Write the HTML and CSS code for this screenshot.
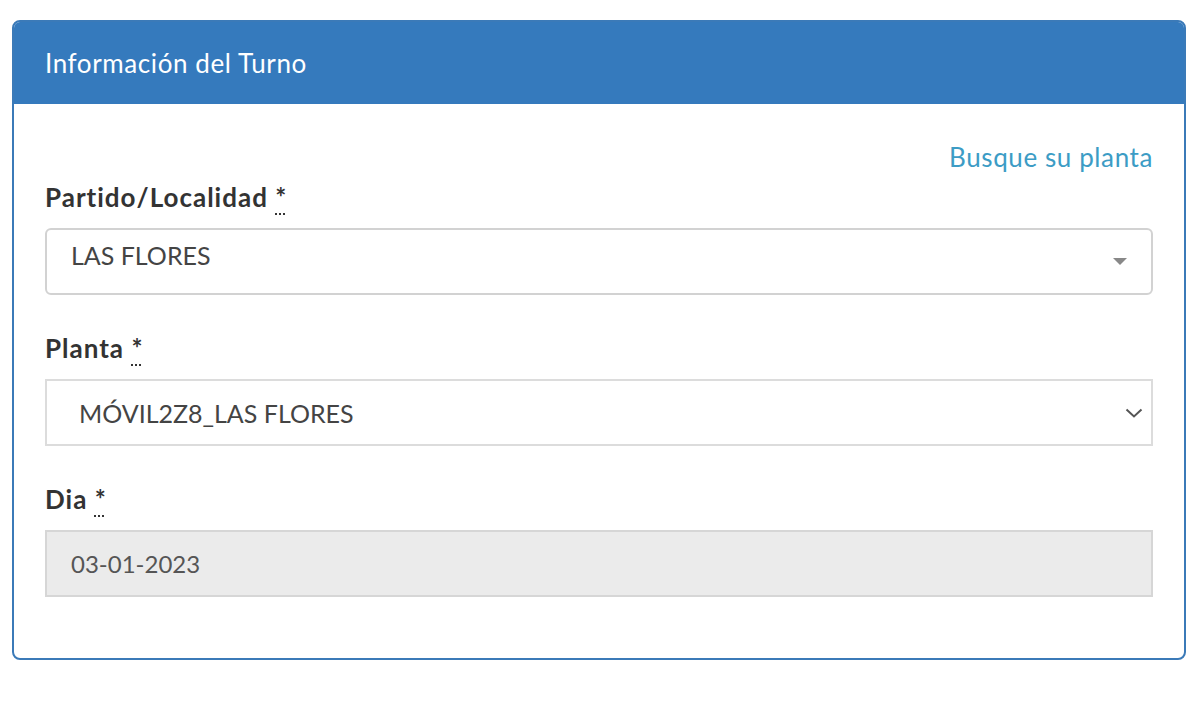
FILE: index.html
```html
<!DOCTYPE html>
<html lang="es">
<head>
<meta charset="utf-8">
<title>Información del Turno</title>
<link rel="stylesheet" href="styles.css">
</head>
<body>
<div class="panel">
  <div class="panel-heading">Información del Turno</div>
  <div class="panel-body">
    <div class="link-row"><a href="#" class="link">Busque su planta</a></div>
    <div class="form-group">
      <label class="label">Partido/Localidad <abbr title="requerido">*</abbr></label>
      <div class="select2">
        <span class="select2-text">LAS FLORES</span>
        <svg class="caret" width="14" height="7" viewBox="0 0 14 7"><path d="M0 0 L14 0 L7 7 Z" fill="#888"/></svg>
      </div>
    </div>
    <div class="form-group">
      <label class="label">Planta <abbr title="requerido">*</abbr></label>
      <div class="native-select">
        <span class="native-text">MÓVIL2Z8_LAS FLORES</span>
        <svg class="chevron" width="18" height="10" viewBox="0 0 18 10"><path d="M1.5 1.5 L9 8.5 L16.5 1.5" fill="none" stroke="#555" stroke-width="2"/></svg>
      </div>
    </div>
    <div class="form-group last">
      <label class="label">Dia <abbr title="requerido">*</abbr></label>
      <div class="input-disabled">03-01-2023</div>
    </div>
  </div>
</div>
</body>
</html>
```

FILE: styles.css
```css
html, body {
  margin: 0;
  padding: 0;
  background: #ffffff;
}
body {
  font-family: "Lato", "Liberation Sans", sans-serif;
  color: #333;
  padding: 20px 14px 43px 12px;
}
.panel {
  border: 2px solid #3b7ab8;
  border-radius: 8px;
  overflow: hidden;
  background: #fff;
}
.panel-heading {
  background: #357abd;
  color: #fff;
  font-size: 26px;
  letter-spacing: 0.6px;
  height: 82px;
  line-height: 82px;
  padding: 0 31px;
}
.panel-body {
  padding: 38px 31px 61px 31px;
}
.link-row {
  display: flex;
  justify-content: flex-end;
  height: 30px;
  line-height: 30px;
  margin-bottom: 10px;
}
.link {
  color: #3c9cc5;
  text-decoration: none;
  font-size: 26px;
  letter-spacing: 0.6px;
}
.form-group {
  margin-bottom: 38px;
}
.form-group.last {
  margin-bottom: 0;
}
.label {
  display: block;
  font-weight: bold;
  font-size: 26px;
  letter-spacing: 1px;
  line-height: 30px;
  color: #333;
  margin-bottom: 16px;
}
abbr {
  text-decoration: underline dotted;
  text-underline-offset: 6px;
  text-decoration-thickness: 2px;
  cursor: help;
}
.select2 {
  display: flex;
  align-items: flex-start;
  justify-content: space-between;
  height: 63px;
  border: 2px solid #d2d2d2;
  border-radius: 6px;
  padding: 0 24px 0 24px;
  background: #fff;
}
.select2-text {
  font-size: 25px;
  color: #444;
  line-height: 50px;
}
.caret {
  margin-top: 28px;
}
.native-select {
  display: flex;
  align-items: center;
  justify-content: space-between;
  height: 63px;
  border: 2px solid #dcdcdc;
  padding: 0 8px 0 32px;
  background: #fff;
}
.native-text {
  font-size: 25px;
  color: #444;
}
.input-disabled {
  height: 63px;
  border: 2px solid #d6d6d6;
  background: #ebebeb;
  padding: 0 24px;
  font-size: 24px;
  line-height: 63px;
  color: #555;
}
```
